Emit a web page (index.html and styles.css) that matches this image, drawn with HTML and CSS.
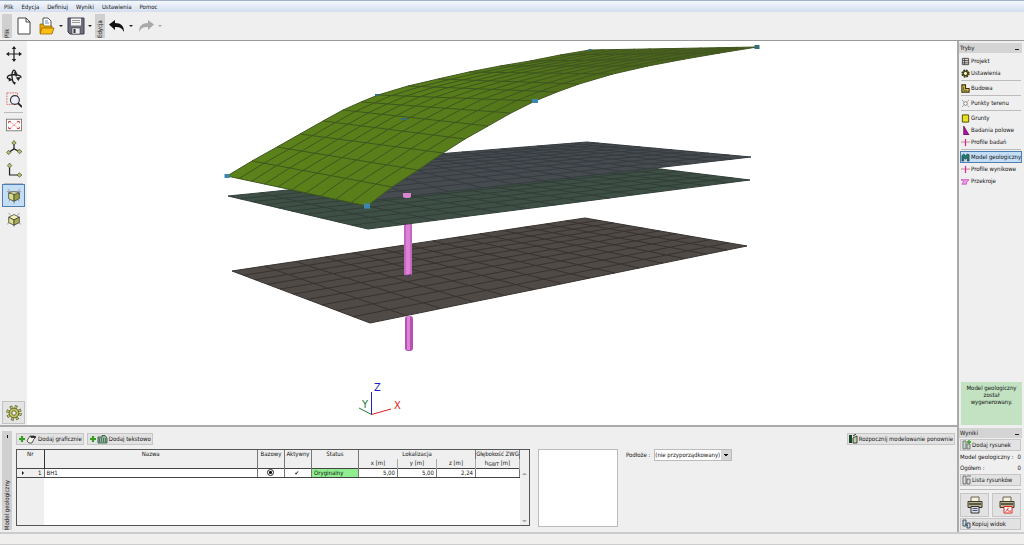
FILE: index.html
```html
<!DOCTYPE html>
<html lang="pl">
<head>
<meta charset="utf-8">
<title>Model geologiczny</title>
<link rel="stylesheet" href="styles.css">
</head>
<body>
<div class="app">
  <nav class="menubar">
    <button>Plik</button><button>Edycja</button><button>Definiuj</button><button>Wyniki</button><button>Ustawienia</button><button>Pomoc</button>
  </nav>

  <header class="toolbar">
    <span class="grip">Plik</span>
    <button class="tool new" aria-label="Nowy"><svg width="16" height="18" viewBox="0 0 16 18"><path d="M2 1h8l4 4v12H2z" fill="#fff" stroke="#444"/><path d="M10 1v4h4" fill="none" stroke="#444"/></svg></button>
    <button class="tool open" aria-label="Otwórz"><svg width="16" height="18" viewBox="0 0 16 18"><path d="M4 10V1h5l3 3v6" fill="#fff" stroke="#555"/><path d="M6 4h3M6 6h4" stroke="#5b8cc4"/><path d="M1 16V7h3l1 2h8v7z" fill="#e9a800" stroke="#8a6200" stroke-width=".7"/><path d="M1 17l2-6h12l-2 6z" fill="#fdbd12" stroke="#8a6200" stroke-width=".7"/></svg></button>
    <button class="caret" aria-label="Ostatnie pliki"></button>
    <button class="tool save" aria-label="Zapisz"><svg width="18" height="18" viewBox="0 0 18 18"><path d="M1 1h16v16H3l-2-2z" fill="#6e6e80" stroke="#3c3c46"/><rect x="4" y="1.500" width="10" height="7" fill="#f4f4f4"/><path d="M5 3.500h8M5 5.500h8" stroke="#999"/><rect x="5" y="11" width="8" height="6" fill="#eee" stroke="#444" stroke-width=".6"/><rect x="6.500" y="12" width="2" height="4" fill="#334"/></svg></button>
    <button class="caret" aria-label="Opcje zapisu"></button>
    <span class="grip">Edycja</span>
    <button class="tool undo" aria-label="Cofnij"><svg width="18" height="14" viewBox="0 0 18 14"><path d="M1 5.500L7 1v3c6 0 9 3 9 9-2-4-4-5-9-5v3z" fill="#111"/></svg></button>
    <button class="caret" aria-label="Lista cofnięć"></button>
    <button class="tool redo" aria-label="Ponów" disabled><svg width="18" height="14" viewBox="0 0 18 14"><path d="M17 5.500L11 1v3c-6 0-9 3-9 9 2-4 4-5 9-5v3z" fill="#aaa"/></svg></button>
    <button class="caret off" aria-label="Lista ponowień" disabled></button>
  </header>

  <div class="body">
    <div class="work">
      <div class="stage">
        <div class="toolbox">
          <button aria-label="Przesuń"><svg viewBox="0 0 18 18"><path d="M9 2v14M2 9h14" stroke="#222" stroke-width="1.400"/><path d="M9 0l2.500 3.500h-5zM9 18l2.500-3.500h-5zM0 9l3.500-2.500v5zM18 9l-3.500-2.500v5z" fill="#222"/></svg></button>
          <button aria-label="Obróć"><svg viewBox="0 0 18 18"><g fill="none" stroke="#222" stroke-width="1.500"><path d="M10 16.500C6.500 15 5.500 4 8.500 1.500c2-.8 3 3 3 7"/><path d="M5 12C-1 10 1 7 8 6.500c6-.3 10 1.500 8.500 3.500"/></g><path d="M8.500 3.500l4.500 1-2.500 3zM3.500 9.500l4 3-4.500 1.500zM11 9.500l5.500-.5-2.500 4.500zM7 14l4 1-1 3z" fill="#222"/></svg></button>
          <button aria-label="Powiększ"><svg viewBox="0 0 18 18"><path d="M1 1h12v13H1z" fill="none" stroke="#d66" stroke-dasharray="2 1"/><circle cx="10" cy="9" r="5" fill="#eef" fill-opacity=".8" stroke="#333" stroke-width="1.300"/><path d="M13.500 12.500L18 17" stroke="#222" stroke-width="2"/></svg></button>
          <hr>
          <button aria-label="Pokaż wszystko"><svg viewBox="0 0 18 18"><rect x=".5" y="2.500" width="17" height="13" fill="#fff" stroke="#777"/><path d="M4 5l10 8M14 5L4 13" stroke="#e88" stroke-width=".8"/><path d="M3 7V5h2.500M12.500 5H15v2M3 11v2h2.500M12.500 13H15v-2" fill="none" stroke="#c22"/></svg></button>
          <button aria-label="Widok aksonometryczny"><svg viewBox="0 0 18 18"><path d="M9 3v7M9 10l-6 4M9 10l6 3" stroke="#222" stroke-width="1.400"/><g fill="#b8bd62" stroke="#444" stroke-width=".7"><path d="M6.500 3.500L9 .5l2.500 3L9 5.500zM.5 14L3 11.500 5.500 14 3 16.500zM12.500 12.500l2.500-2 3 2.500-3 2.500z"/></g></svg></button>
          <button aria-label="Widok z góry"><svg viewBox="0 0 18 18"><path d="M4 3v10.500h10" fill="none" stroke="#222" stroke-width="1.400"/><g fill="#b8bd62" stroke="#444" stroke-width=".7"><path d="M1.500 3L4 0l2.500 3L4 5.500zM12.500 13.500l2.500-2.500 3 2.500-3 2.500z"/></g></svg></button>
          <hr>
          <button class="on" aria-label="Widok bryły z dołu"><svg viewBox="0 0 18 18"><path d="M1 4h16M2 1l3 3M16 1l-3 3M9 15v3M3 15l2-2M15 15l-2-2" stroke="#888" stroke-width=".8"/><path d="M3 5.500L9 7v8l-6-3z" fill="#dde08a" stroke="#333" stroke-width=".8"/><path d="M15 5.500L9 7v8l6-3z" fill="#9a9e3e" stroke="#333" stroke-width=".8"/><path d="M3 5.500L9 4l6 1.500L9 7z" fill="#e9ebb0" stroke="#333" stroke-width=".6"/></svg></button>
          <button aria-label="Widok bryły z góry"><svg viewBox="0 0 18 18"><path d="M3 2l2 3M15 2l-2 3M1 15l3-2M17 15l-3-2M9 15v3" stroke="#888" stroke-width=".8"/><path d="M3 7l6-3 6 3-6 3z" fill="#f1f2b8" stroke="#333" stroke-width=".8"/><path d="M3 7l6 3v6l-6-3z" fill="#dde08a" stroke="#333" stroke-width=".8"/><path d="M15 7l-6 3v6l6-3z" fill="#a9ad50" stroke="#333" stroke-width=".8"/></svg></button>
          <button class="gear" aria-label="Ustawienia rysunku"><svg viewBox="0 0 18 18"><circle cx="9" cy="9" r="7" fill="none" stroke="#55582a" stroke-width="3.400" stroke-dasharray="2.900 2.600"/><circle cx="9" cy="9" r="5.500" fill="#c3c75e" stroke="#55582a"/><circle cx="9" cy="9" r="7" fill="none" stroke="#c3c75e" stroke-width="2" stroke-dasharray="1.900 3.600" stroke-dashoffset="-.5"/><circle cx="9" cy="9" r="2.500" fill="#f0f0f0" stroke="#55582a"/></svg></button>
        </div>
        <main class="viewport">
          <svg class="scene" viewBox="27 41 930 384" role="img" aria-label="Model 3D">
            <g id="base"></g>
            <g><rect x="405" y="316" width="8" height="35" rx="3" fill="#b850b4"/><rect x="407" y="316" width="3" height="34" fill="#d787d2"/></g>
            <g><path d="M404 222h8v53l-2-1-2 2-2-1-2 0z" fill="#c567c0"/><path d="M406 222h4v52h-4z" fill="#dc82d6"/><path d="M407 275l1.500 3 1.500-3z" fill="#5b2d6c"/></g>
            <g id="lower"></g>
            <g id="upper"></g>
            <path d="M403 193h8v4l-2 1h-4l-2-1z" fill="#da84d0"/>
            <g id="terrain"></g>
            <g id="marks"></g>
            <g fill="none" stroke-width="1"><path d="M371.500 415v-23" stroke="#2020c8"/><path d="M371.500 414.500L391 409" stroke="#e02020"/><path d="M371.500 414.500L359 408" stroke="#207a30"/></g>
            <text class="axis z" x="374" y="391">Z</text><text class="axis y" x="362" y="408">Y</text><text class="axis x" x="394" y="409">X</text>
          </svg>
        </main>
      </div>

      <section class="frame">
        <div class="side"><i></i><span>Model geologiczny</span></div>
        <div class="panel">
          <div class="actions">
            <button class="btn"><svg width="19" height="10" viewBox="0 0 19 10"><path d="M4 2v6M1 5h6" stroke="#35a020" stroke-width="2.200"/><path d="M10 5l2-3h4l2 1-2 2-2 4h-3L9 7z" fill="#f4f4ea" stroke="#333" stroke-width=".8"/><path d="M12 2h6l-1 2-4 0z" fill="#333"/></svg>Dodaj graficznie</button>
            <button class="btn"><svg width="19" height="10" viewBox="0 0 19 10"><path d="M4 2v6M1 5h6" stroke="#35a020" stroke-width="2.200"/><path d="M9 9V3h4V1.500h3L18 4v5z" fill="#8fb796" stroke="#234b38" stroke-width=".8"/><path d="M10 7h7M10 5h7" stroke="#234" stroke-dasharray="1 1"/></svg>Dodaj tekstowo</button>
            <button class="btn again"><svg width="9" height="10" viewBox="0 0 9 10"><path d="M0 1h3v8H0z" fill="#17472b"/><path d="M4 9V4l4-2v7z" fill="#b9d3a0" stroke="#222" stroke-width=".8"/><path d="M4 2l3-2" stroke="#222"/></svg>Rozpocznij modelowanie ponownie</button>
          </div>
          <div class="row">
            <div class="grid">
              <table>
                <colgroup><col class="c-nr"><col><col class="c-flag"><col class="c-flag"><col class="c-status"><col class="c-num"><col class="c-num"><col class="c-num"><col class="c-gw"></colgroup>
                <thead>
                  <tr><th rowspan="2">Nr</th><th rowspan="2">Nazwa</th><th rowspan="2">Bazowy</th><th rowspan="2">Aktywny</th><th rowspan="2">Status</th><th colspan="3">Lokalizacja</th><th>Głębokość ZWG</th></tr>
                  <tr><th>x [m]</th><th>y [m]</th><th>z [m]</th><th>h<sub>GWT</sub> [m]</th></tr>
                </thead>
                <tbody>
                  <tr><td class="nr"><div><i></i>1</div></td><td>BH1</td><td class="mid"><input type="radio" name="base" aria-label="Bazowy" checked></td><td class="mid"><input type="checkbox" aria-label="Aktywny" checked></td><td class="ok">Oryginalny</td><td class="num">5,00</td><td class="num">5,00</td><td class="num">2,24</td><td></td></tr>
                </tbody>
              </table>
              <div class="scroll"><i class="up"></i><i class="down"></i></div>
            </div>
            <div class="preview"></div>
            <label class="soil">Podłoże :<select><option>(nie przyporządkowany)</option></select></label>
          </div>
        </div>
      </section>
    </div>

    <aside class="rail">
      <div class="head">Tryby<i></i></div>
      <nav class="modes">
        <button><svg viewBox="0 0 10 10"><path d="M1.500 1.500h7v7h-7zM1.500 4h7M1.500 6.500h7M4 1.500v7" fill="#ddd" stroke="#444"/></svg>Projekt</button>
        <button><svg viewBox="0 0 10 10"><circle cx="5" cy="5" r="3.800" fill="none" stroke="#222" stroke-width="1.600" stroke-dasharray="1.800 1.200"/><circle cx="5" cy="5" r="2.500" fill="#ffe" stroke="#4c4a00" stroke-width="1.800"/></svg>Ustawienia</button>
        <hr>
        <button><svg viewBox="0 0 10 10"><path d="M1 1h4v4h4v4H1z" fill="#e3c64e" stroke="#3a3000" stroke-width="1.200"/><path d="M3 3v4h4" fill="none" stroke="#554"/></svg>Budowa</button>
        <hr>
        <button><svg viewBox="0 0 10 10"><path d="M1 1l2 2M9 1L7 3M1 9l2-2M9 9L7 7" stroke="#999"/><circle cx="5" cy="5" r="2" fill="#fff" stroke="#777"/></svg>Punkty terenu</button>
        <hr>
        <button><svg viewBox="0 0 10 10"><path d="M1.500 1h7v8h-7z" fill="#e8e020" stroke="#4a4600"/></svg>Grunty</button>
        <button><svg viewBox="0 0 10 10"><path d="M3 0v10h6z" fill="#b010b0" stroke="#402" stroke-width=".7"/></svg>Badania polowe</button>
        <button><svg viewBox="0 0 10 10"><path d="M0 4.500h10" stroke="#c77"/><path d="M5 1v8" stroke="#d428a0" stroke-width="1.400"/></svg>Profile badań</button>
        <hr>
        <button class="on"><svg viewBox="0 0 10 10"><path d="M1 9V3l2-2 2 2 2-2 2 1v7H7V5L5 7 3 5v4z" fill="#1e8068" stroke="#123" stroke-width=".6"/></svg>Model geologiczny</button>
        <button><svg viewBox="0 0 10 10"><path d="M0 4.500h10" stroke="#c77"/><path d="M5 1v8" stroke="#d428a0" stroke-width="1.400"/></svg>Profile wynikowe</button>
        <button><svg viewBox="0 0 10 10"><path d="M0 3h9L6 6v2H1l2-3z" fill="#f29be8" stroke="#c040b8" stroke-width=".8"/></svg>Przekroje</button>
      </nav>
      <p class="notice">Model geologiczny został wygenerowany.</p>
      <div class="head">Wyniki<i></i></div>
      <div class="results">
        <button class="btn"><svg width="9" height="10" viewBox="0 0 9 10"><path d="M1 1h3v8H1zM5 4h3v5H5z" fill="#c8d8c8" stroke="#555" stroke-width=".7"/><path d="M7 0v4M5 2h4" stroke="#35a020" stroke-width="1.300"/></svg>Dodaj rysunek</button>
        <div class="count"><span>Model geologiczny :</span><span>0</span></div>
        <div class="count"><span>Ogółem :</span><span>0</span></div>
        <button class="btn"><svg width="9" height="10" viewBox="0 0 9 10"><path d="M1 1h3v8H1zM5 4h3v5H5zM5 1h4" fill="#ddd" stroke="#555" stroke-width=".8"/></svg>Lista rysunków</button>
        <hr>
        <div class="prints">
          <button class="btn" aria-label="Drukuj"><svg width="16" height="18" viewBox="0 0 16 18"><path d="M4 1h8v5H4z" fill="#f6f0dc" stroke="#665"/><path d="M1 5.500h14v6H1z" fill="#b9b28a" stroke="#3c3a28"/><path d="M2 8h12" stroke="#333" stroke-width="1.400"/><path d="M4 10.500h8v6.500H4z" fill="#dde" stroke="#333"/><path d="M5.500 12.500h5M5.500 14.500h5" stroke="#456"/></svg></button>
          <button class="btn" aria-label="Drukuj do PDF"><svg width="16" height="18" viewBox="0 0 16 18"><path d="M4 1h8v5H4z" fill="#f6f0dc" stroke="#665"/><path d="M1 5.500h14v6H1z" fill="#b9b28a" stroke="#3c3a28"/><path d="M2 8h12" stroke="#333" stroke-width="1.400"/><path d="M5 10.500h8v6.500H5z" fill="#fff" stroke="#d22"/><path d="M6.500 15.500c2-1 3-3 2.500-4M8 13c1 2 2 2.500 4 2" fill="none" stroke="#d22"/></svg></button>
        </div>
        <button class="btn"><svg width="9" height="10" viewBox="0 0 9 10"><path d="M1 1h3v6H1zM5 4h3v5H5z" fill="#cde" stroke="#345" stroke-width=".9"/><path d="M3 5l3 2" stroke="#262"/></svg>Kopiuj widok</button>
      </div>
    </aside>
  </div>
  <footer class="status"></footer>
</div>
<script src="scene.js"></script>
</body>
</html>
```

FILE: styles.css
```css
* { box-sizing: border-box; }
body {
  margin: 0;
  font: 6px/8px "DejaVu Sans Condensed", "DejaVu Sans", sans-serif;
  color: #111;
  background: #efefef;
}
button, select, input { font: inherit; color: inherit; margin: 0; }
button { border: 0; padding: 0; background: none; }
svg { display: block; flex: none; }
hr { border: 0; border-top: 1px solid #bbb; margin: 0; }
.app { display: flex; flex-direction: column; min-height: 100vh; }

.menubar {
  display: flex;
  gap: 8px;
  height: 12px;
  padding: 1px 4px 0;
  border-top: 1px solid #9fb2c8;
  background: linear-gradient(#f4f8fd, #d3deef);
}
.toolbar {
  display: flex;
  align-items: center;
  height: 29px;
  padding: 0 2px 1px;
  border-bottom: 1px solid #999;
}
.grip {
  writing-mode: vertical-rl;
  transform: rotate(180deg);
  width: 10px;
  height: 24px;
  line-height: 10px;
  background: #d0d0d0;
}
.tool { display: flex; justify-content: center; width: 24px; }
.caret { width: 6px; height: 12px; display: grid; place-items: center; }
.caret::before, .head i, .scroll i { content: ""; display: block; }
.caret::before {
  border: 2px solid transparent;
  border-top-color: #222;
  border-bottom: 0;
}
.caret.off::before { border-top-color: #aaa; }
.open { width: 22px; }
.save { width: 23px; }
.undo, .redo { width: 23px; }
.save + .caret { margin-right: 2px; }

.body { flex: 1; display: flex; }
.work { flex: 1; min-width: 0; display: flex; flex-direction: column; }
.stage { flex: 1; display: flex; min-height: 0; }
.toolbox {
  width: 27px;
  padding: 1px 2px;
  display: flex;
  flex-direction: column;
}
.toolbox button {
  height: 23px;
  border: 1px solid transparent;
  display: grid;
  place-items: center;
}
.toolbox svg { width: 16px; height: 16px; }
.toolbox hr { margin: 1px 2px 0; }
.toolbox .on { border-color: #4f7fae; background: #c4def6; }
.toolbox .gear { margin-top: auto; border-color: #c2c2c2; background: #e4e4e4; }
.viewport { flex: 1; min-width: 0; background: #fff; display: flex; }
.scene { width: 100%; flex: 1; }
.axis { font: 11px "DejaVu Sans Condensed", sans-serif; }
.axis.x { fill: #e02020; }
.axis.y { fill: #207a30; }
.axis.z { fill: #2020c8; }

.frame {
  display: flex;
  gap: 4px;
  padding: 4px 2px 2px;
  border-top: 2px solid #aaa;
}
.side {
  width: 10px;
  background: #d0d0d0;
  display: flex;
  flex-direction: column;
  justify-content: space-between;
  align-items: center;
  padding-top: 4px;
}
.side i { width: 1px; height: 3px; background: #111; }
.side span { writing-mode: vertical-rl; transform: rotate(180deg); line-height: 10px; }
.panel { flex: 1; min-width: 0; padding: 2px 0 3px; }
.actions { display: flex; gap: 3px; margin-bottom: 4px; }
.btn {
  display: flex;
  align-items: center;
  gap: 1px;
  height: 12px;
  padding: 0 1px;
  border: 1px solid #c6c6c6;
  background: #e2e2e2;
  white-space: nowrap;
}
.again { margin-left: auto; }
.row { display: flex; align-items: flex-start; gap: 8px; }
.grid {
  flex: 0 1 514px;
  height: 77px;
  display: flex;
  border: 1px solid #555;
  background: linear-gradient(90deg, #efefef 27px, #fff 27px);
}
table { flex: 1; height: 28px; border-collapse: collapse; table-layout: fixed; width: 502px; }
.c-nr { width: 27px; } .c-flag { width: 27px; } .c-status { width: 47px; }
.c-num { width: 39px; } .c-gw { width: 44px; }
th {
  padding: 0;
  font-weight: normal;
  vertical-align: top;
  height: 9px;
  background: #efefef;
  border-right: 1px solid #777;
  white-space: nowrap;
}
th:first-child { border-right-color: #333; }
thead tr:last-child th { border-right-color: #aaa; }
sub { font-size: 5px; line-height: 0; vertical-align: -1px; }
td {
  padding: 0 2px;
  height: 9px;
  border: 1px solid #777;
  border-top-color: #444;
  border-bottom-color: #444;
  background: #fff;
}
td:first-child { border-left: 0; background: #efefef; }
.nr div { display: flex; justify-content: space-between; align-items: center; padding-left: 3px; }
.nr i { border: 2px solid transparent; border-left-color: #111; border-right: 0; }
.num { text-align: right; }
td.ok { background: #90ee90; }
.mid input { display: block; margin: 0 auto; width: 7px; height: 7px; appearance: none; }
.mid input[type="radio"] {
  border: 1px solid #222;
  border-radius: 50%;
  background: radial-gradient(#111 35%, #fff 50%);
}
.mid input[type="checkbox"] { line-height: 7px; }
.mid input[type="checkbox"]:checked::before { content: "✔"; }
.scroll {
  width: 9px;
  padding: 23px 2px 3px;
  background: #efefef;
  display: flex;
  flex-direction: column;
  justify-content: space-between;
}
.scroll i { border: 2px solid transparent; }
.scroll .up { border-bottom-color: #aaa; border-top: 0; }
.scroll .down { border-top-color: #aaa; border-bottom: 0; }
.preview { width: 80px; height: 78px; border: 1px solid #bbb; background: #fff; }
.soil { display: flex; align-items: center; gap: 4px; }
.soil select {
  width: 78px;
  height: 12px;
  padding: 0;
  border: 1px solid #bbb;
  border-radius: 0;
  appearance: none;
  background:
    linear-gradient(#111, #111) right 3px top 4px / 4px 1px no-repeat,
    linear-gradient(#111, #111) right 4px top 5px / 2px 1px no-repeat,
    linear-gradient(90deg, #fff calc(100% - 10px), #d6d6d6 0);
}

.rail {
  width: 67px;
  padding: 2px 2px 2px 0;
  border-left: 2px solid #aaa;
  display: flex;
  flex-direction: column;
}
.head {
  display: flex;
  justify-content: space-between;
  height: 10px;
  padding: 1px 3px 0 1px;
  background: #d4d4d4;
}
.head i { width: 4px; height: 1px; margin-top: 5px; background: #222; }
.modes { display: flex; flex-direction: column; padding: 2px 0 0 1px; }
.modes button {
  display: flex;
  align-items: center;
  gap: 1px;
  height: 12px;
  border: 1px solid transparent;
  white-space: nowrap;
}
.modes svg { width: 9px; height: 9px; }
.modes hr { margin: 1px 1px; }
.modes .on { border-color: #4f7fae; background: #c4def6; }
.notice {
  margin: auto 0 3px 2px;
  height: 43px;
  padding: 2px 4px;
  text-align: center;
  line-height: 7px;
  background: #c2e2c2;
}
.results { display: flex; flex-direction: column; gap: 1px; padding: 1px 1px 0 1px; }
.count { display: flex; justify-content: space-between; height: 10px; line-height: 10px; white-space: nowrap; }
.results hr { margin: 2px 0; }
.prints { display: grid; grid-template-columns: 1fr 1fr; gap: 3px; }
.prints .btn { height: 24px; justify-content: center; }
.status {
  height: 13px;
  border-top: 2px solid #ccc;
  border-bottom: 1px solid #ccc;
  background: #f1eeee;
}
```

FILE: scene.js
```js
// Projective map from the unit square onto a quad a (0,0), b (0,1), c (1,1), d (1,0).
function projector(a, b, c, d) {
  const sx = a[0] - d[0] + c[0] - b[0], sy = a[1] - d[1] + c[1] - b[1];
  const dx1 = d[0] - c[0], dx2 = b[0] - c[0], dy1 = d[1] - c[1], dy2 = b[1] - c[1];
  const den = dx1 * dy2 - dx2 * dy1;
  const g = (sx * dy2 - dx2 * sy) / den, h = (dx1 * sy - sx * dy1) / den;
  return (u, v) => {
    const w = g * u + h * v + 1;
    return [
      ((d[0] - a[0] + g * d[0]) * u + (b[0] - a[0] + h * b[0]) * v + a[0]) / w,
      ((d[1] - a[1] + g * d[1]) * u + (b[1] - a[1] + h * b[1]) * v + a[1]) / w
    ];
  };
}

function shape(points, attrs) {
  const el = document.createElementNS("http://www.w3.org/2000/svg", "polyline");
  el.setAttribute("points", points.map(p => p.map(n => n.toFixed(1)).join(",")).join(" "));
  for (const k in attrs) el.setAttribute(k, attrs[k]);
  return el;
}

const NU = 14, NV = 10;

function surface(id, at, fill, line) {
  const host = document.getElementById(id);
  const along = v => Array.from({ length: NU + 1 }, (_, i) => at(i / NU, v));
  const outline = along(0).concat(along(1).reverse());
  outline.push(outline[0]);
  host.append(shape(outline, { fill, stroke: line, "stroke-width": 1 }));
  for (let j = 1; j < NV; j++) host.append(shape(along(j / NV), { fill: "none", stroke: line, "stroke-width": 1 }));
  for (let i = 1; i < NU; i++) host.append(shape([at(i / NU, 0), at(i / NU, 1)], { fill: "none", stroke: line, "stroke-width": 1 }));
}

surface("base", projector([232, 271], [370, 323], [747, 246], [585, 218]), "#4f4a46", "#383330");
surface("lower", projector([228, 196], [368, 229], [750, 180], [587, 160]), "#3e5046", "#323e38");
surface("upper", projector([300, 165], [375, 200], [751, 157], [587, 142]), "#454b4f", "#373c41");

const left = [[227, 176], [252, 161], [277, 147], [300, 134], [323, 121], [343, 110], [361, 102], [378, 95],
  [408, 86], [438, 79], [469, 72], [500, 66], [530, 61], [560, 55], [590, 50]];
const right = [[367, 206], [392, 187], [418, 170], [443, 153], [465, 139], [488, 126], [511, 113], [535, 101],
  [557, 92], [579, 84], [613, 74], [648, 66], [685, 59], [720, 53], [757, 47]];
surface("terrain", (u, v) => {
  const i = Math.round(u * NU), t = v * (.85 + .15 * v);
  return [0, 1].map(k => left[i][k] + (right[i][k] - left[i][k]) * t);
}, "url(#turf)", "#3f5620");

const ns = "http://www.w3.org/2000/svg";
const defs = document.createElementNS(ns, "defs");
defs.innerHTML = '<linearGradient id="turf"><stop offset="0" stop-color="#5c821a"/><stop offset=".45" stop-color="#577c1a"/><stop offset="1" stop-color="#46561f"/></linearGradient>';
document.querySelector(".scene").prepend(defs);

const near = "#3d87ad", far = "#33707c";
for (const [x, y, w, h, fill] of [[227, 176, 5, 4, near], [367, 206, 6, 5, near], [377, 95, 4, 2, far], [404, 119, 6, 2, far],
  [535, 101, 6, 4, near], [590, 50, 3, 2, far], [757, 47, 5, 4, far]]) {
  const r = document.createElementNS(ns, "rect");
  r.setAttribute("x", x - w / 2);
  r.setAttribute("y", y - h / 2);
  r.setAttribute("width", w);
  r.setAttribute("height", h);
  r.setAttribute("fill", fill);
  document.getElementById("marks").append(r);
}
```
